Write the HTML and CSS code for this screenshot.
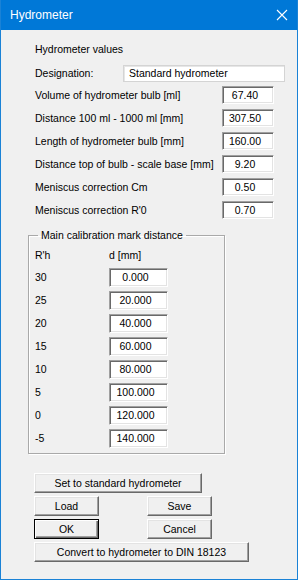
FILE: index.html
```html
<!DOCTYPE html>
<html lang="en">
<head>
    <meta charset="UTF-8">
    <title>Hydrometer</title>
    <link rel="stylesheet" href="styles.css">
</head>
<body>
    <div class="window">
        <!-- Title bar -->
        <div class="titlebar">
            <span class="title">Hydrometer</span>
            <svg class="close" width="12" height="12" viewBox="0 0 12 12">
                <path d="M1 1 L11 11 M11 1 L1 11" stroke="#ffffff" stroke-width="1.1" fill="none"/>
            </svg>
        </div>

        <div class="content">
            <div class="heading">Hydrometer values</div>

            <div class="row row-designation">
                <span class="label label-short">Designation:</span>
                <div class="field field-wide">Standard hydrometer</div>
            </div>

            <div class="row"><span class="label">Volume of hydrometer bulb [ml]</span><div class="field field-num">67.40</div></div>
            <div class="row"><span class="label">Distance 100 ml - 1000 ml [mm]</span><div class="field field-num">307.50</div></div>
            <div class="row"><span class="label">Length of hydrometer bulb [mm]</span><div class="field field-num">160.00</div></div>
            <div class="row"><span class="label">Distance top of bulb - scale base [mm]</span><div class="field field-num">9.20</div></div>
            <div class="row"><span class="label">Meniscus correction Cm</span><div class="field field-num">0.50</div></div>
            <div class="row"><span class="label">Meniscus correction R'0</span><div class="field field-num">0.70</div></div>

            <!-- Calibration group -->
            <fieldset class="group">
                <legend>Main calibration mark distance</legend>
                <div class="cal-head">
                    <span class="cal-label">R'h</span>
                    <span>d [mm]</span>
                </div>
                <div class="cal-row"><span class="cal-label">30</span><div class="field field-cal">0.000</div></div>
                <div class="cal-row"><span class="cal-label">25</span><div class="field field-cal">20.000</div></div>
                <div class="cal-row"><span class="cal-label">20</span><div class="field field-cal">40.000</div></div>
                <div class="cal-row"><span class="cal-label">15</span><div class="field field-cal">60.000</div></div>
                <div class="cal-row"><span class="cal-label">10</span><div class="field field-cal">80.000</div></div>
                <div class="cal-row"><span class="cal-label">5</span><div class="field field-cal">100.000</div></div>
                <div class="cal-row"><span class="cal-label">0</span><div class="field field-cal">120.000</div></div>
                <div class="cal-row"><span class="cal-label">-5</span><div class="field field-cal">140.000</div></div>
            </fieldset>

            <!-- Buttons -->
            <div class="buttons">
                <button class="btn btn-set">Set to standard hydrometer</button>
                <div class="btn-row">
                    <button class="btn btn-small">Load</button>
                    <button class="btn btn-small">Save</button>
                </div>
                <div class="btn-row">
                    <button class="btn btn-small btn-default">OK</button>
                    <button class="btn btn-small">Cancel</button>
                </div>
                <button class="btn btn-convert">Convert to hydrometer to DIN 18123</button>
            </div>
        </div>
    </div>
</body>
</html>
```

FILE: styles.css
```css
* {
    margin: 0;
    padding: 0;
    box-sizing: border-box;
}

body {
    font-family: 'Liberation Sans', Arial, sans-serif;
    font-size: 10.5px;
    line-height: 13px;
    color: #000000;
    background: #ffffff;
}

.window {
    width: 298px;
    height: 580px;
    background: #f0f0f0;
    border: 1px solid #1a82d6;
    border-top: none;
}

/* Title bar */
.titlebar {
    height: 30px;
    background: #0078d7;
    display: flex;
    align-items: center;
    justify-content: space-between;
    padding: 0 9px 0 9px;
}

.title {
    color: #ffffff;
    font-size: 12px;
    line-height: 14px;
}

.close {
    display: block;
}

/* Hydrometer values */
.content {
    padding-top: 13px;
}

.heading {
    margin-left: 34px;
    margin-bottom: 9px;
}

.row {
    display: flex;
    align-items: center;
    margin-left: 34px;
    height: 18px;
    margin-bottom: 5px;
}

.row-designation {
    height: 17px;
    margin-bottom: 4px;
}

.label {
    width: 187px;
    white-space: nowrap;
}

.label-short {
    width: 88px;
}

.field {
    background: #ffffff;
    height: 18px;
    border: 1px solid;
    border-color: #a0a0a0 #ffffff #ffffff #a0a0a0;
    box-shadow: inset 1px 1px #696969, inset -1px -1px #e3e3e3;
    display: flex;
    align-items: center;
    justify-content: center;
    padding-right: 6px;
    white-space: nowrap;
}

.field-wide {
    width: 162px;
    height: 17px;
    justify-content: flex-start;
    padding: 0 0 0 5px;
    border-color: #d4d4d4;
    box-shadow: inset 1px 1px #e6e6e6;
}

.field-num {
    width: 52px;
}

/* Calibration group */
.group {
    margin: 10px 0 0 27px;
    width: 197px;
    height: 225px;
    border: 1px solid #a9a9a9;
    box-shadow: inset 1px 1px #ffffff, 1px 1px #ffffff;
    padding: 7px 0 0 6px;
}

.group legend {
    margin-left: 3px;
    padding: 0 3px;
    font-size: 10.5px;
    line-height: 13px;
}

.cal-head {
    display: flex;
    margin-bottom: 6px;
}

.cal-label {
    width: 74px;
}

.cal-row {
    display: flex;
    align-items: center;
    height: 19px;
    margin-bottom: 4px;
}

.field-cal {
    width: 59px;
    height: 19px;
}

/* Buttons */
.buttons {
    margin: 19px 0 0 33px;
    display: flex;
    flex-direction: column;
    gap: 3px;
}

.btn-row {
    display: flex;
    gap: 48px;
}

.btn {
    font-family: 'Liberation Sans', Arial, sans-serif;
    font-size: 10.5px;
    line-height: 13px;
    height: 20px;
    background: #f0f0f0;
    color: #000000;
    border: 1px solid;
    border-color: #ffffff #696969 #696969 #ffffff;
    box-shadow: inset -1px -1px #a0a0a0, inset 1px 1px #e3e3e3;
    text-align: center;
}

.btn-set {
    width: 168px;
}

.btn-small {
    width: 65px;
}

.btn-default {
    border-color: #000000;
    box-shadow: inset 1px 1px #ffffff, inset -1px -1px #696969, inset -2px -2px #a0a0a0;
}

.btn-convert {
    width: 215px;
}
```
